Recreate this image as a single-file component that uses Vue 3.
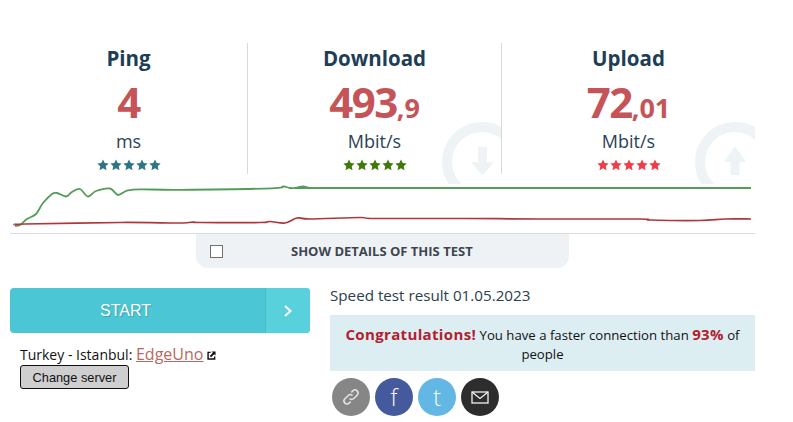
<template>
  <div class="page">
    <div class="results">
      <div v-for="col in columns" :key="col.title" class="col">
        <div v-if="col.ghost" class="ghost-clip">
          <svg class="ghost" width="80" height="80" viewBox="0 0 80 80">
            <circle cx="40" cy="40" r="35" fill="none" stroke="#eef3f6" stroke-width="10" />
            <path :d="col.ghost" fill="#eef3f6" stroke="#eef3f6" stroke-width="2" stroke-linejoin="round" />
          </svg>
        </div>
        <h2 class="title">{{ col.title }}</h2>
        <div class="value">{{ col.value }}<span v-if="col.decimals" class="decimals">,{{ col.decimals }}</span></div>
        <div class="unit">{{ col.unit }}</div>
        <div class="stars">
          <svg v-for="n in 5" :key="n" width="12" height="12" viewBox="0 0 24 24" :fill="col.star">
            <path d="M12 1l3.4 7.2 7.8 1-5.7 5.4 1.500 7.800-7-3.800-7 3.800 1.500-7.800L.8 9.200l7.800-1z" />
          </svg>
        </div>
      </div>
    </div>

    <div class="chart">
      <svg width="745" height="49" viewBox="10 184 745 49">
        <path :d="greenLine" fill="none" stroke="#569c59" stroke-width="1.8" />
        <path :d="redLine" fill="none" stroke="#b2353d" stroke-width="1.7" />
      </svg>
    </div>

    <div class="details-tab">
      <input type="checkbox" class="details-check" />
      <span class="details-label">Show details of this test</span>
    </div>

    <div class="bottom">
      <div class="left">
        <div class="start">
          <span class="start-label">START</span>
          <span class="start-arrow">
            <svg width="10" height="14" viewBox="0 0 10 14">
              <path d="M2 2l5.500 5L2 12" fill="none" stroke="#fff" stroke-width="2" />
            </svg>
          </span>
        </div>
        <div class="server">
          Turkey - Istanbul: <a class="server-link" href="#">EdgeUno</a>
          <svg class="ext" width="9" height="9" viewBox="0 0 10 10">
            <path d="M4 1.500H1.200v7.300h7.300V6" fill="none" stroke="#111" stroke-width="1.600" />
            <path d="M5 .5h4.500V5L8 3.500 4.500 7 3 5.500 6.500 2z" fill="#111" />
          </svg>
        </div>
        <button class="change">Change server</button>
      </div>

      <div class="right">
        <div class="result-date">Speed test result 01.05.2023</div>
        <div class="banner">
          <b class="congrats">Congratulations!</b> You have a faster connection than <b class="percent">93%</b> of people
        </div>
        <div class="share">
          <span class="circle link">
            <svg width="20" height="20" viewBox="0 0 20 20" fill="none" stroke="#e4e4e4" stroke-width="1.500">
              <path d="M8.500 11.500a3 3 0 0 0 4.300 0l3.300-3.300a3 3 0 0 0-4.300-4.300l-1.500 1.500" />
              <path d="M11.500 8.500a3 3 0 0 0-4.300 0l-3.300 3.300a3 3 0 0 0 4.300 4.300l1.500-1.500" />
            </svg>
          </span>
          <span class="circle fb">f</span>
          <span class="circle tw">t</span>
          <span class="circle mail">
            <svg width="18" height="13" viewBox="0 0 18 13" fill="none" stroke="#f2f2f2" stroke-width="1.300">
              <rect x="1" y="1" width="16" height="11" />
              <path d="M1 1l8 6.500L17 1" />
            </svg>
          </span>
        </div>
      </div>
    </div>
  </div>
</template>

<script setup>
const columns = [
  { title: 'Ping', value: '4', decimals: '', unit: 'ms', star: '#2f7487', ghost: '' },
  {
    title: 'Download',
    value: '493',
    decimals: '9',
    unit: 'Mbit/s',
    star: '#3f7a08',
    ghost: 'M37 26h7v15h6L40.500 52 31 41h6z'
  },
  {
    title: 'Upload',
    value: '72',
    decimals: '01',
    unit: 'Mbit/s',
    star: '#ef3e46',
    ghost: 'M36.500 52h7V39h6L40 26l-9.500 13h6z'
  }
]

// smooth line through the sampled points
const smooth = (pts) => {
  let d = `M${pts[0][0]} ${pts[0][1]}`
  for (let i = 0; i < pts.length - 1; i++) {
    const p0 = pts[i - 1] || pts[i]
    const p1 = pts[i]
    const p2 = pts[i + 1]
    const p3 = pts[i + 2] || p2
    const c1x = p1[0] + (p2[0] - p0[0]) / 6
    const c1y = p1[1] + (p2[1] - p0[1]) / 6
    const c2x = p2[0] - (p3[0] - p1[0]) / 6
    const c2y = p2[1] - (p3[1] - p1[1]) / 6
    d += ` C${c1x.toFixed(1)} ${c1y.toFixed(1)} ${c2x.toFixed(1)} ${c2y.toFixed(1)} ${p2[0]} ${p2[1]}`
  }
  return d
}

const greenLine = smooth([
  [15, 226], [20, 225], [27, 219], [36, 214], [43, 203], [52, 194], [57, 193], [66, 196.5],
  [72, 192], [80, 189], [88, 196.5], [96, 191], [110, 188.5], [118, 195], [127, 190.6],
  [140, 189.3], [180, 189.8], [272, 188.300], [283, 186.300], [290, 188], [296, 187.800], [303, 186.300], [311, 188], [325, 188], [751, 188]
])

const redLine = smooth([
  [15, 225], [25, 224], [120, 222.500], [180, 223], [193, 222], [200, 222.500], [260, 222.500],
  [270, 221.500], [285, 223], [297, 218], [310, 219], [360, 217.500], [375, 218.500], [465, 218.500],
  [540, 219], [640, 219], [650, 220], [700, 220.500], [725, 219], [751, 219]
])
</script>

<style scoped>
.page {
  box-sizing: border-box;
  width: 793px;
  height: 422px;
  padding: 43px 38px 0 10px;
  font-family: "Open Sans", "Noto Sans", sans-serif;
  color: #2b3e4d;
  overflow: hidden;
}

.results {
  display: grid;
  grid-template-columns: 238px 254px 253px;
  grid-template-rows: 131px;
}

.col {
  position: relative;
  display: flex;
  flex-direction: column;
  align-items: center;
  border-right: 1px solid #d9d9d9;
}

.col:last-child {
  border-right: none;
}

.ghost-clip {
  position: absolute;
  top: 0;
  left: 0;
  right: 0;
  height: 141px;
  overflow: hidden;
}

.ghost {
  position: absolute;
  top: 79px;
  left: 194px;
}

.col:last-child .ghost {
  left: 193px;
}

.title {
  position: relative;
  margin: 0;
  font-size: 20.5px;
  line-height: 30px;
  font-weight: 700;
  color: #1d3e56;
}

.value {
  position: relative;
  margin-top: 5px;
  font-size: 42px;
  line-height: 48px;
  font-weight: 700;
  letter-spacing: -1.5px;
  color: #c55458;
}

.decimals {
  font-size: 27px;
  line-height: 1;
  letter-spacing: 0;
}

.unit {
  position: relative;
  margin-top: 2px;
  font-size: 18px;
  line-height: 26px;
  color: #2b4356;
}

.stars {
  position: relative;
  display: flex;
  gap: 1px;
  margin-top: 5px;
}

.chart {
  position: relative;
  box-sizing: border-box;
  height: 50px;
  margin-top: 10px;
  background: #fff;
  border-bottom: 1px solid #dcdcdc;
}

.chart svg {
  display: block;
}

.details-tab {
  display: flex;
  align-items: center;
  width: 373px;
  height: 34px;
  margin-left: 186px;
  background: #eef2f4;
  border-radius: 0 0 12px 12px;
}

.details-check {
  appearance: none;
  box-sizing: border-box;
  width: 13px;
  height: 13px;
  margin: 0 0 0 14px;
  background: #fff;
  border: 1px solid #707070;
}

.details-label {
  margin-left: 68px;
  font-size: 13px;
  font-weight: 700;
  text-transform: uppercase;
  color: #3d4650;
}

.bottom {
  display: grid;
  grid-template-columns: 300px 425px;
  column-gap: 20px;
  margin-top: 20px;
}

.start {
  display: flex;
  height: 45px;
  border-radius: 4px;
  background: #4ac6d5;
  overflow: hidden;
}

.start-label {
  flex: 1;
  padding-right: 24px;
  text-align: center;
  line-height: 45px;
  font-family: "Liberation Sans", Arial, sans-serif;
  font-size: 16px;
  color: #fff;
  text-shadow: 1px 1px 1px rgba(0, 0, 0, 0.2);
}

.start-arrow {
  display: flex;
  align-items: center;
  justify-content: center;
  width: 44px;
  background: #59d1dd;
  border-left: 1px solid #44bccb;
}

.server {
  margin: 11px 0 0 10px;
  font-size: 14px;
  line-height: 20px;
  color: #111;
}

.server-link {
  color: #b8685e;
  font-size: 16px;
}

.ext {
  margin-left: 4px;
}

.change {
  display: block;
  box-sizing: border-box;
  width: 109px;
  height: 24px;
  margin-left: 10px;
  padding: 0;
  background: #cfcfcf;
  border: 1px solid #111;
  border-radius: 3px;
  font-family: "Liberation Sans", Arial, sans-serif;
  font-size: 12.8px;
  color: #111;
}

.result-date {
  font-size: 15.2px;
  line-height: 20px;
  margin-top: -3px;
}

.banner {
  box-sizing: border-box;
  height: 56px;
  margin-top: 10px;
  padding: 10px 10px;
  background: #ddeef3;
  text-align: center;
  font-size: 13.2px;
  line-height: 19px;
  color: #111;
}

.congrats {
  font-size: 15px;
  letter-spacing: 0.35px;
  color: #b3202e;
}

.percent {
  font-size: 15px;
  letter-spacing: 0.3px;
  color: #b3202e;
}

.share {
  display: flex;
  gap: 5px;
  margin: 7px 0 0 2px;
}

.circle {
  display: flex;
  align-items: center;
  justify-content: center;
  width: 38px;
  height: 38px;
  border-radius: 50%;
  font-size: 23px;
  font-weight: 300;
  color: #fff;
}

.link {
  background: #868686;
}

.fb {
  background: #445a9c;
}

.tw {
  background: #62b7e5;
}

.mail {
  background: #2d2d2d;
}
</style>
